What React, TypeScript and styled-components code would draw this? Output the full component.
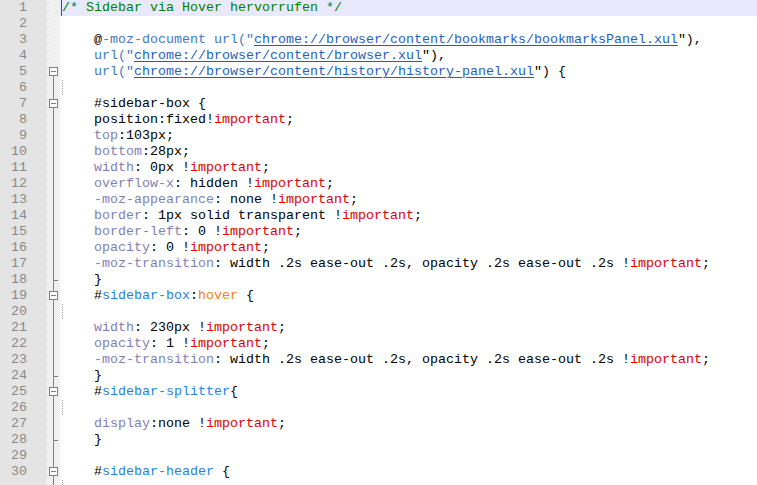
import React from "react";
import styled, { createGlobalStyle, css } from "styled-components";

const GlobalStyle = createGlobalStyle`
  html, body { margin: 0; padding: 0; background: #ffffff; overflow: hidden; }
  #root { width: 757px; height: 485px; }
`;

type Kind = "t" | "c" | "d" | "l" | "p" | "i" | "h" | "r";
type Fold = "none" | "start" | "box" | "line" | "tick";
type Line = {
  toks: [Kind, string][];
  indent?: boolean;
  guide?: boolean;
  fold: Fold;
  current?: boolean;
  partial?: boolean;
};

const kindStyles: Record<Kind, ReturnType<typeof css>> = {
  t: css`color: #000000;`,
  c: css`color: #008000;`,
  d: css`color: #4479c2;`,
  l: css`color: #1f5fc0; text-decoration: underline; text-underline-offset: 2px;`,
  p: css`color: #7f7fb5;`,
  i: css`color: #1f82e0;`,
  h: css`color: #f08020;`,
  r: css`color: #e00000;`,
};

const Editor = styled.div`
  display: flex;
  flex-direction: column;
  width: 757px;
  height: 485px;
  overflow: hidden;
  font-family: "Liberation Mono", "Courier New", monospace;
  font-size: 13.33px;
  line-height: 16px;
`;

const Row = styled.div`
  display: flex;
  height: 16px;
  flex: 0 0 16px;
`;

const LineNo = styled.div`
  width: 46px;
  flex: 0 0 46px;
  box-sizing: border-box;
  padding-right: 19px;
  text-align: right;
  background: #e4e4e4;
  color: #888888;
`;

const FoldCell = styled.div`
  width: 14px;
  flex: 0 0 14px;
  background-color: #f6f6f6;
  background-image: repeating-conic-gradient(#e6e6e6 0% 25%, #fbfbfb 0% 50%);
  background-size: 2px 2px;
  svg { display: block; }
`;

const Code = styled.div<{ $current?: boolean }>`
  position: relative;
  flex: 1;
  box-sizing: border-box;
  padding-left: 2px;
  white-space: pre;
  background: ${(p) => (p.$current ? "#e8e8ff" : "#ffffff")};
`;

const Caret = styled.span`
  position: absolute;
  left: 1px;
  top: 0;
  width: 1px;
  height: 16px;
  background: #50408c;
`;

const Indent = styled.span<{ $guide?: boolean }>`
  display: inline-block;
  width: 32px;
  height: 16px;
  vertical-align: top;
  ${(p) =>
    p.$guide &&
    css`
      background-image: repeating-linear-gradient(to bottom, #a0a0a0 0 1px, transparent 1px 2px);
      background-size: 1px 16px;
      background-repeat: no-repeat;
      background-position: 0 0;
    `}
`;

const Tok = styled.span<{ $k: Kind }>`
  ${(p) => kindStyles[p.$k]}
`;

const G = "#808080";

function FoldMark({ type }: { type: Fold }) {
  return (
    <svg width="14" height="16" viewBox="0 0 14 16">
      {(type === "line" || type === "tick") && (
        <line x1="7.5" y1="0" x2="7.5" y2="16" stroke={G} strokeWidth="1" />
      )}
      {type === "tick" && <line x1="7.5" y1="8.5" x2="12" y2="8.5" stroke={G} strokeWidth="1" />}
      {(type === "box" || type === "start") && (
        <>
          {type === "box" && <line x1="7.5" y1="0" x2="7.5" y2="3.5" stroke={G} strokeWidth="1" />}
          <line x1="7.5" y1="11.5" x2="7.5" y2="16" stroke={G} strokeWidth="1" />
          <rect x="3.5" y="3.5" width="8" height="8" fill="#ffffff" stroke={G} strokeWidth="1" />
          <line x1="5" y1="7.5" x2="10" y2="7.5" stroke={G} strokeWidth="1" />
        </>
      )}
    </svg>
  );
}

const imp: [Kind, string][] = [["t", "!"], ["r", "important"], ["t", ";"]];

const lines: Line[] = [
  { toks: [["c", "/* Sidebar via Hover hervorrufen */"]], fold: "none", current: true },
  { toks: [], fold: "none" },
  {
    indent: true,
    fold: "none",
    toks: [["t", "@"], ["d", "-moz-document url(\""], ["l", "chrome://browser/content/bookmarks/bookmarksPanel.xul"], ["t", "\"),"]],
  },
  { indent: true, fold: "none", toks: [["d", "url(\""], ["l", "chrome://browser/content/browser.xul"], ["t", "\"),"]] },
  { indent: true, fold: "start", toks: [["d", "url(\""], ["l", "chrome://browser/content/history/history-panel.xul"], ["t", "\") {"]] },
  { indent: true, guide: true, fold: "line", toks: [] },
  { indent: true, fold: "box", toks: [["t", "#sidebar-box {"]] },
  { indent: true, fold: "line", toks: [["t", "position:fixed"], ...imp] },
  { indent: true, fold: "line", toks: [["p", "top"], ["t", ":103px;"]] },
  { indent: true, fold: "line", toks: [["p", "bottom"], ["t", ":28px;"]] },
  { indent: true, fold: "line", toks: [["p", "width"], ["t", ": 0px "], ...imp] },
  { indent: true, fold: "line", toks: [["p", "overflow-x"], ["t", ": hidden "], ...imp] },
  { indent: true, fold: "line", toks: [["p", "-moz-appearance"], ["t", ": none "], ...imp] },
  { indent: true, fold: "line", toks: [["p", "border"], ["t", ": 1px solid transparent "], ...imp] },
  { indent: true, fold: "line", toks: [["p", "border-left"], ["t", ": 0 "], ...imp] },
  { indent: true, fold: "line", toks: [["p", "opacity"], ["t", ": 0 "], ...imp] },
  { indent: true, fold: "line", toks: [["p", "-moz-transition"], ["t", ": width .2s ease-out .2s, opacity .2s ease-out .2s "], ...imp] },
  { indent: true, fold: "tick", toks: [["t", "}"]] },
  { indent: true, fold: "box", toks: [["t", "#"], ["i", "sidebar-box"], ["t", ":"], ["h", "hover"], ["t", " {"]] },
  { indent: true, guide: true, fold: "line", toks: [] },
  { indent: true, fold: "line", toks: [["p", "width"], ["t", ": 230px "], ...imp] },
  { indent: true, fold: "line", toks: [["p", "opacity"], ["t", ": 1 "], ...imp] },
  { indent: true, fold: "line", toks: [["p", "-moz-transition"], ["t", ": width .2s ease-out .2s, opacity .2s ease-out .2s "], ...imp] },
  { indent: true, fold: "tick", toks: [["t", "}"]] },
  { indent: true, fold: "box", toks: [["t", "#"], ["i", "sidebar-splitter"], ["t", "{"]] },
  { indent: true, guide: true, fold: "line", toks: [] },
  { indent: true, fold: "line", toks: [["p", "display"], ["t", ":none "], ...imp] },
  { indent: true, fold: "tick", toks: [["t", "}"]] },
  { fold: "line", toks: [] },
  { indent: true, fold: "box", toks: [["t", "#"], ["i", "sidebar-header"], ["t", " {"]] },
  { indent: true, guide: true, fold: "line", toks: [], partial: true },
];

export default function App() {
  return (
    <>
      <GlobalStyle />
      <Editor>
        {lines.map((ln, i) => (
          <Row key={i}>
            <LineNo>{ln.partial ? "" : i + 1}</LineNo>
            <FoldCell>
              <FoldMark type={ln.fold} />
            </FoldCell>
            <Code $current={ln.current}>
              {ln.current && <Caret />}
              {ln.indent && <Indent $guide={ln.guide} />}
              {ln.toks.map(([k, s], j) => (
                <Tok key={j} $k={k}>
                  {s}
                </Tok>
              ))}
            </Code>
          </Row>
        ))}
      </Editor>
    </>
  );
}
